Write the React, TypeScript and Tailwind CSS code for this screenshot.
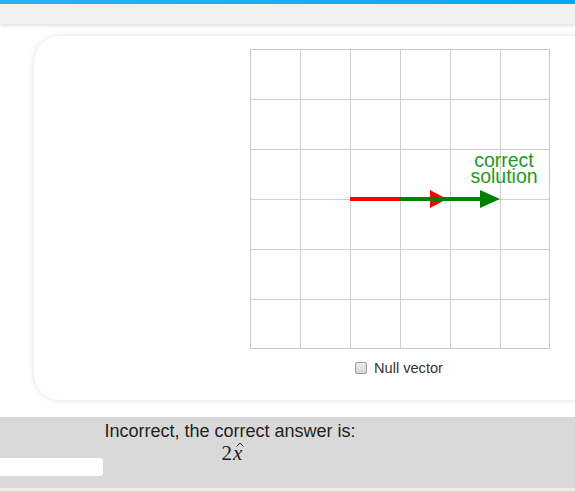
import React from "react";

function Plot() {
  const lines = [0, 50, 100, 150, 200, 250, 299];
  return (
    <svg width="301" height="301" viewBox="0 0 301 301" className="block">
      {lines.map((v) => (
        <line key={"v" + v} x1={v + 0.5} y1={0} x2={v + 0.5} y2={300} stroke="#cfcfcf" strokeWidth={1} />
      ))}
      {lines.map((v) => (
        <line key={"h" + v} x1={0} y1={v + 0.5} x2={300} y2={v + 0.5} stroke="#cfcfcf" strokeWidth={1} />
      ))}
      <rect x={0.5} y={0.5} width={299} height={299} fill="none" stroke="#c8c8c8" />
      {/* red vector */}
      <line x1={100} y1={150} x2={184} y2={150} stroke="#ff0000" strokeWidth={4} />
      <polygon points="180,141 197,150 180,159" fill="#ff0000" />
      {/* green vector */}
      <line x1={150} y1={150} x2={234} y2={150} stroke="#008000" strokeWidth={4} />
      <polygon points="230,141 250,150 230,159" fill="#008000" />
      <text x={254} y={118} textAnchor="middle" fill="#1f9a1f" fontSize={19.5} fontFamily="'Liberation Sans', Arial, sans-serif">correct</text>
      <text x={254} y={134} textAnchor="middle" fill="#1f9a1f" fontSize={19.5} fontFamily="'Liberation Sans', Arial, sans-serif">solution</text>
    </svg>
  );
}

export default function App() {
  return (
    <div className="w-[575px] h-[491px] overflow-hidden bg-white relative" style={{ fontFamily: "'Liberation Sans', Arial, sans-serif" }}>
      <div className="h-[4px] bg-gradient-to-r from-[#29b4f6] to-[#04a6f3]" />
      <div className="h-[20px] bg-[#f0f0f0] shadow-[0_2px_3px_rgba(0,0,0,0.12)] relative z-10" />
      <div className="pt-[12px] pl-[34px]">
        <div className="w-[580px] h-[364px] bg-white rounded-[26px] shadow-[0_0_6px_rgba(0,0,0,0.12)] pt-[13px] pl-[216px]">
          <Plot />
          <div className="flex items-center gap-[7px] pl-[105px] mt-[10px]">
            <span className="w-[12px] h-[12px] rounded-[2px] border border-[#9a9a9a] bg-gradient-to-b from-[#ececec] to-[#d6d6d6]" />
            <span className="text-[14.6px] text-[#333] leading-[16px]">Null vector</span>
          </div>
        </div>
      </div>
      <div className="mt-[17px] h-[71px] bg-[#d9d9d9] relative">
        <div className="absolute left-0 top-[41px] w-[103px] h-[18px] bg-white rounded-r-[3px]" />
        <div className="flex flex-col items-center w-[460px] pt-[4px]">
          <div className="text-[18px] leading-[20px] text-[#222]">Incorrect, the correct answer is:</div>
          <div className="text-[21px] leading-[24px] text-[#222] mt-[0px] pl-[4px]" style={{ fontFamily: "'Liberation Serif', 'Times New Roman', serif" }}>
            2<span className="italic relative inline-block ml-[1px]">
              x
              <svg width="8" height="5" viewBox="0 0 8 5" className="absolute left-[3px] top-[1px]">
                <polyline points="0.5,4.5 4,1 7.5,4.5" fill="none" stroke="#222" strokeWidth="1" />
              </svg>
            </span>
          </div>
        </div>
      </div>
      <div className="h-[3px] bg-[#eeeeee]" />
    </div>
  );
}
